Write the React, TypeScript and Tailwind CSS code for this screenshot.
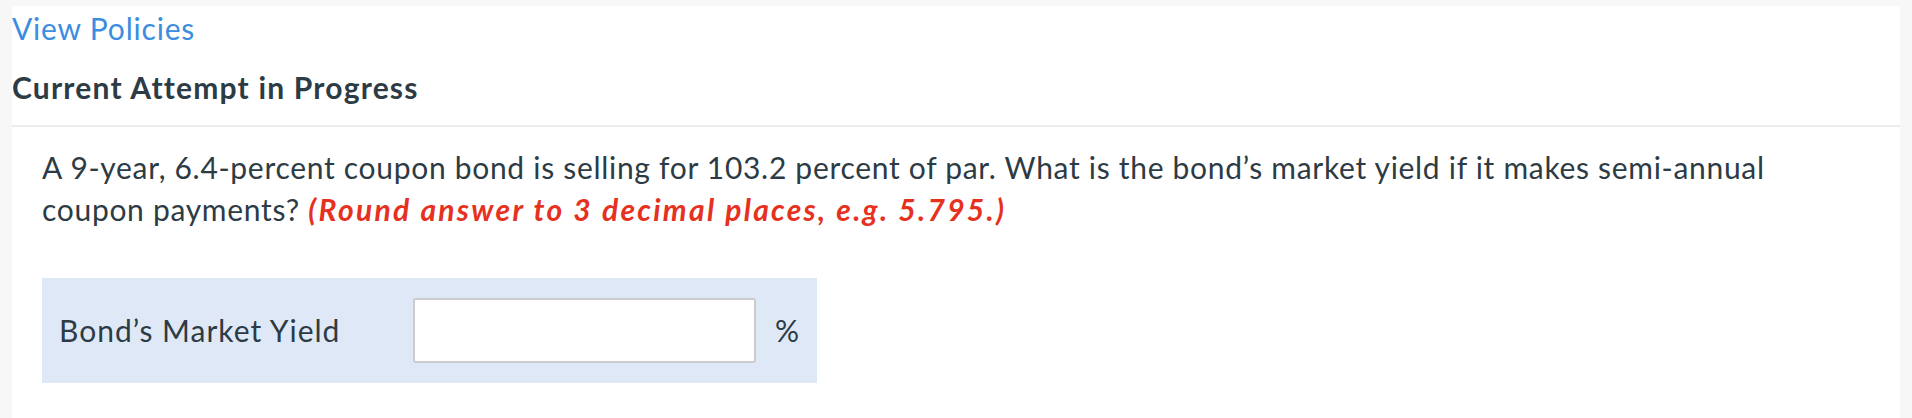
export default function App() {
  return (
    <div className="min-h-[418px] w-full bg-[#f7f7f7] pt-[6px] px-[12px] font-['Lato',sans-serif] text-[#2d3b45]">
      <div className="bg-white min-h-[412px] pt-[5px]">
        {/* Header */}
        <a className="block text-[30px] leading-[34px] tracking-[0.8px] text-[#3b8de0] cursor-pointer">View Policies</a>
        <h2 className="mt-[25px] text-[30px] leading-[34px] tracking-[1.2px] font-bold text-[#2d3b45]">
          Current Attempt in Progress
        </h2>
        <div className="mt-[21px] h-[2px] bg-[#ececec]" />

        {/* Question */}
        <div className="px-[30px] pt-[19px]">
          <p className="max-w-[1770px] text-[30px] leading-[42px] tracking-[0.7px]">
            A 9-year, 6.4-percent coupon bond is selling for 103.2 percent of par. What is the bond’s market yield if it
            makes semi-annual coupon payments?{" "}
            <span className="font-bold italic tracking-[2.3px] text-[#e5311e]">
              (Round answer to 3 decimal places, e.g. 5.795.)
            </span>
          </p>

          {/* Answer row */}
          <div className="mt-[48px] inline-flex h-[105px] items-center bg-[#dfe8f7] pl-[17px] pr-[18px]">
            <span className="w-[354px] text-[30px] tracking-[1px]">Bond’s Market Yield</span>
            <input
              type="text"
              className="h-[65px] w-[343px] rounded-[3px] border-2 border-[#cccccc] bg-white px-3 text-[28px] outline-none"
            />
            <span className="ml-[19px] text-[30px]">%</span>
          </div>
        </div>
      </div>
    </div>
  );
}
